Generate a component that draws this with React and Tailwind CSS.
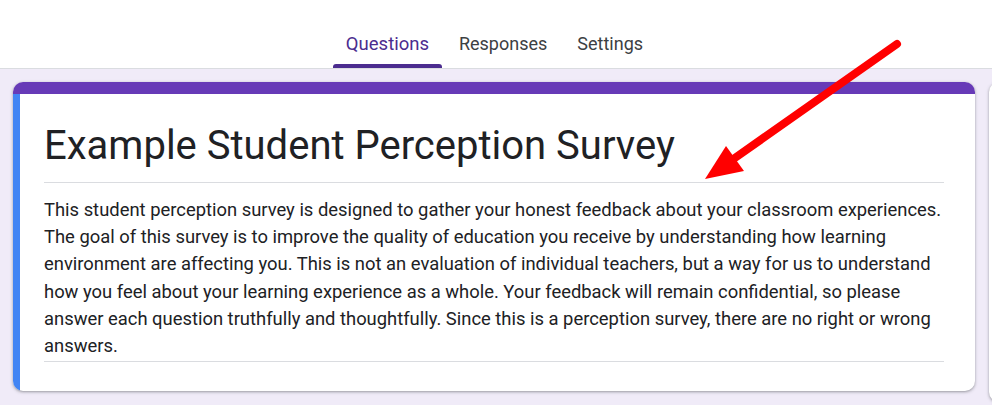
import React from "react";

export default function App() {
  return (
    <div className="relative w-[992px] h-[405px] overflow-hidden bg-[#f0ebf8] font-['Roboto',sans-serif]">
      <div className="h-[69px] bg-white border-b border-[#dadce0] flex justify-center">
        <div className="flex items-end ml-[-16px]">
          <div className="relative flex flex-col items-center w-[109px]">
            <span className="text-[18.5px] text-[#4b2c8f] leading-none mb-[11px]">Questions</span>
            <div className="h-[4px] w-full bg-[#4b2c8f] rounded-t-[3px]"></div>
          </div>
          <div className="flex flex-col items-center ml-[17px]">
            <span className="text-[18px] text-[#3c4043] leading-none mb-[15px]">Responses</span>
          </div>
          <div className="flex flex-col items-center ml-[30px]">
            <span className="text-[18px] text-[#3c4043] leading-none mb-[15px]">Settings</span>
          </div>
        </div>
      </div>
      <div className="flex pt-[13px] pl-[13px]">
        <div className="shrink-0 w-[962px] h-[309px] bg-white rounded-[10px] overflow-hidden shadow-[0_1px_2px_rgba(60,64,67,0.3),0_1px_3px_1px_rgba(60,64,67,0.15)] flex flex-col">
          <div className="h-[12px] bg-[#673ab7]"></div>
          <div className="flex flex-1">
            <div className="w-[7px] bg-[#4285f4]"></div>
            <div className="flex-1 pl-[24px] pr-[31px]">
              <div className="pt-[27px] pb-[11px] border-b border-[#dadce0]">
                <div className="text-[40px] leading-[50px] text-[#202124]">Example Student Perception Survey</div>
              </div>
              <div className="pt-[13px] pb-[2px] border-b border-[#dadce0] text-[18.4px] leading-[27.2px] text-[#202124]">
                This student perception survey is designed to gather your honest feedback about your classroom experiences. The goal of this survey is to improve the quality of education you receive by understanding how learning environment are affecting you. This is not an evaluation of individual teachers, but a way for us to understand how you feel about your learning experience as a whole. Your feedback will remain confidential, so please answer each question truthfully and thoughtfully. Since this is a perception survey, there are no right or wrong answers.
              </div>
            </div>
          </div>
        </div>
        <div className="shrink-0 ml-[14px] w-[60px] h-[320px] bg-white rounded-[10px] shadow-[0_1px_2px_rgba(60,64,67,0.3),0_1px_3px_1px_rgba(60,64,67,0.15)]"></div>
      </div>
      <svg className="absolute left-0 top-0" width="992" height="405" viewBox="0 0 992 405">
        <line x1="897" y1="44" x2="732" y2="160" stroke="#ff0000" strokeWidth="8" strokeLinecap="round" />
        <polygon points="705,179 726,146 744,171" fill="#ff0000" />
      </svg>
    </div>
  );
}
